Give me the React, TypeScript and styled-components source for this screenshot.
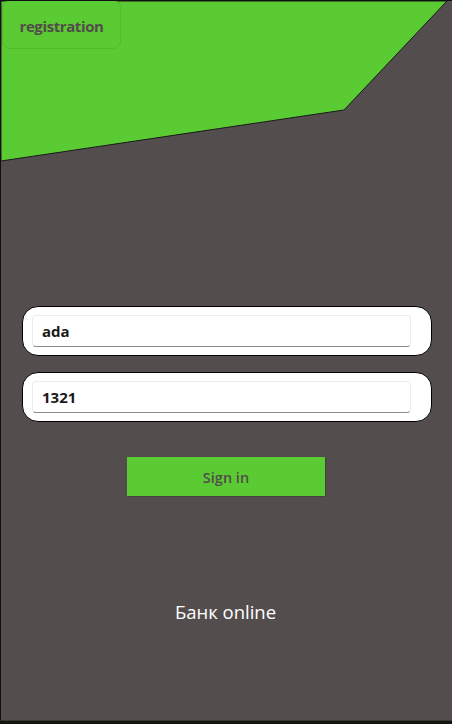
import React from "react";
import styled, { createGlobalStyle } from "styled-components";

const Global = createGlobalStyle`
  html, body { margin: 0; padding: 0; background: #161412; }
  body { font-family: "Open Sans", "Liberation Sans", sans-serif; }
  * { box-sizing: border-box; }
`;

const Screen = styled.div`
  position: relative;
  width: 452px;
  height: 721px;
  background: #534d4d;
  border-left: 1px solid #111;
  border-top: 1px solid #111;
  border-bottom: 1px solid #3d3a33;
  overflow: hidden;
  display: flex;
  flex-direction: column;
`;

const Shape = styled.svg`
  position: absolute;
  left: 0;
  top: 0;
`;

const Header = styled.header`
  position: relative;
  display: flex;
  padding-left: 1px;
`;

const RegButton = styled.button`
  width: 119px;
  height: 49px;
  margin-top: -1px;
  background: #5bcb33;
  border: 1px solid #52bb2e;
  border-radius: 8px;
  color: #524b4b;
  font-family: "Open Sans", sans-serif;
  font-weight: 700;
  font-size: 15px;
  letter-spacing: -0.4px;
  padding: 2px 0 0 0;
  cursor: pointer;
`;

const Form = styled.form`
  position: relative;
  margin-top: 257px;
  display: flex;
  flex-direction: column;
  gap: 16px;
  padding-left: 21px;
  align-items: flex-start;
`;

const Field = styled.div`
  width: 410px;
  height: 50px;
  background: #fff;
  border: 1px solid #000;
  border-radius: 16px;
  padding: 8px 20px 8px 9px;
`;

const Input = styled.input`
  width: 379px;
  height: 32px;
  border: 1px solid #ececec;
  border-bottom: 1px solid #8a8a8a;
  border-radius: 4px;
  padding: 0 9px;
  font-family: "Open Sans", sans-serif;
  font-weight: 700;
  font-size: 15px;
  color: #1a1a1a;
  outline: none;
  background: #fff;
`;

const SignIn = styled.button`
  margin: 19px 0 0 105px;
  width: 199px;
  height: 40px;
  background: #5bcb33;
  border: none;
  border-bottom: 1px solid #4a4040;
  border-right: 1px solid #4a4040;
  color: #524b4b;
  font-family: "Open Sans", sans-serif;
  font-weight: 600;
  font-size: 14.5px;
  padding: 2px 0 0 0;
  cursor: pointer;
`;

const Brand = styled.div`
  margin-top: 102px;
  text-align: center;
  color: #fff;
  font-family: "Open Sans", sans-serif;
  font-size: 18.5px;
  padding-right: 2px;
`;

export default function App() {
  return (
    <>
      <Global />
      <Screen>
        <Shape width="452" height="170" viewBox="0 0 452 170">
          <polygon
            points="0,0 446,0 343,109 0,160"
            fill="#5bcb33"
            stroke="#1a1a1a"
            strokeWidth="1"
          />
        </Shape>
        <Header>
          <RegButton type="button">registration</RegButton>
        </Header>
        <Form onSubmit={(e) => e.preventDefault()}>
          <Field>
            <Input defaultValue="ada" />
          </Field>
          <Field>
            <Input defaultValue="1321" />
          </Field>
          <SignIn type="submit">Sign in</SignIn>
        </Form>
        <Brand>Банк online</Brand>
      </Screen>
    </>
  );
}
